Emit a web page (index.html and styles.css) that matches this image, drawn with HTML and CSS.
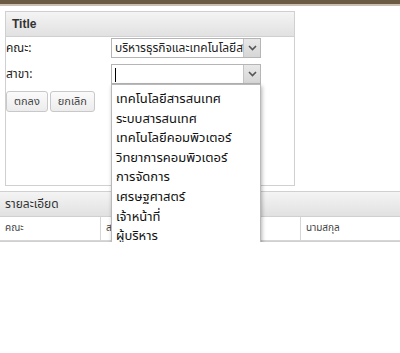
FILE: index.html
```html
<!DOCTYPE html>
<html lang="th">
<head>
  <meta charset="UTF-8">
  <title>Form</title>
  <link rel="stylesheet" href="styles.css">
</head>
<body>
  <div class="topbar"></div>

  <div class="panel form-panel">
    <div class="panel-head">Title</div>
    <div class="panel-body">
      <div class="row">
        <label class="lbl">คณะ:</label>
        <div class="combo">
          <span class="combo-text">บริหารธุรกิจและเทคโนโลยีสารสนเทศ</span>
          <span class="combo-btn"><svg width="9" height="6" viewBox="0 0 9 6"><path d="M1 1 L4.5 4.5 L8 1" fill="none" stroke="#555" stroke-width="1.6"/></svg></span>
        </div>
      </div>
      <div class="row">
        <label class="lbl">สาขา:</label>
        <div class="combo open">
          <span class="combo-text"><span class="caret"></span></span>
          <span class="combo-btn"><svg width="9" height="6" viewBox="0 0 9 6"><path d="M1 1 L4.5 4.5 L8 1" fill="none" stroke="#555" stroke-width="1.6"/></svg></span>
          <ul class="list">
            <li>เทคโนโลยีสารสนเทศ</li>
            <li>ระบบสารสนเทศ</li>
            <li>เทคโนโลยีคอมพิวเตอร์</li>
            <li>วิทยาการคอมพิวเตอร์</li>
            <li>การจัดการ</li>
            <li>เศรษฐศาสตร์</li>
            <li>เจ้าหน้าที่</li>
            <li>ผู้บริหาร</li>
          </ul>
        </div>
      </div>
      <div class="buttons">
        <button class="btn">ตกลง</button>
        <button class="btn">ยกเลิก</button>
      </div>
    </div>
  </div>

  <div class="panel grid-panel">
    <div class="panel-head">รายละเอียด</div>
    <div class="grid-cols">
      <div class="col c1">คณะ</div>
      <div class="col c2">สาขา</div>
      <div class="col c3">นามสกุล</div>
    </div>
  </div>
</body>
</html>
```

FILE: styles.css
```css
body { margin: 0; background: #fff; font-family: Tahoma, "Noto Sans Thai", "DejaVu Sans", "Liberation Sans", sans-serif; color: #222; }
.topbar { height: 4px; background: #6b5a44; border-bottom: 2px solid #c9bfb2; }

.panel { border: 1px solid #d0d0d0; background: #fff; }
.panel-head { height: 24px; line-height: 24px; padding-left: 6px; background: linear-gradient(#f4f4f4, #e1e1e1); border-bottom: 1px solid #d0d0d0; font-weight: bold; font-size: 12px; color: #333; }

.form-panel { width: 288px; height: 173px; margin: 5px 0 0 5px; }
.form-panel .panel-head { font-family: "Liberation Sans", Arial, sans-serif; }
.panel-body { padding: 1px 0 0 0; }

.row { display: flex; align-items: center; height: 20px; margin-bottom: 6px; }
.lbl { width: 105px; font-size: 12px; color: #222; }

.combo { position: relative; display: flex; width: 148px; height: 18px; border: 1px solid #b5b5b5; background: #fff; }
.combo-text { flex: 1; overflow: hidden; white-space: nowrap; font-size: 12px; line-height: 18px; padding-left: 3px; }
.combo-btn { width: 16px; display: flex; align-items: center; justify-content: center; background: linear-gradient(#e8e8e8, #d6d6d6); border-left: 1px solid #c4c4c4; }
.caret { display: inline-block; width: 1px; height: 14px; background: #000; vertical-align: middle; }

.list { position: absolute; top: 19px; left: -1px; width: 148px; margin: 0; padding: 4px 0 3px; list-style: none; background: #fff; border: 1px solid #b9b9b9; box-shadow: 1px 2px 4px rgba(0, 0, 0, 0.3); z-index: 2; }
.list li { height: 19.6px; line-height: 20px; padding-left: 4px; font-size: 13px; color: #111; white-space: nowrap; }

.buttons { display: flex; gap: 2px; margin-top: 7px; }
.btn { height: 21px; padding: 0 7px; border: 1px solid #c8c8c8; border-radius: 3px; background: linear-gradient(#fbfbfb, #ececec); font-family: inherit; font-size: 11px; color: #444; }

.grid-panel { margin-top: 5px; border-left: none; border-right: none; }
.grid-panel .panel-head { font-weight: normal; font-size: 12px; padding-left: 5px; }
.grid-cols { display: flex; height: 23px; border-bottom: 1px solid #d6d6d6; }
.col { line-height: 23px; font-size: 10px; color: #444; padding-left: 5px; border-right: 1px solid #d6d6d6; }
.c1 { width: 95px; }
.c2 { width: 194px; }
.c3 { flex: 1; border-right: none; }
```
